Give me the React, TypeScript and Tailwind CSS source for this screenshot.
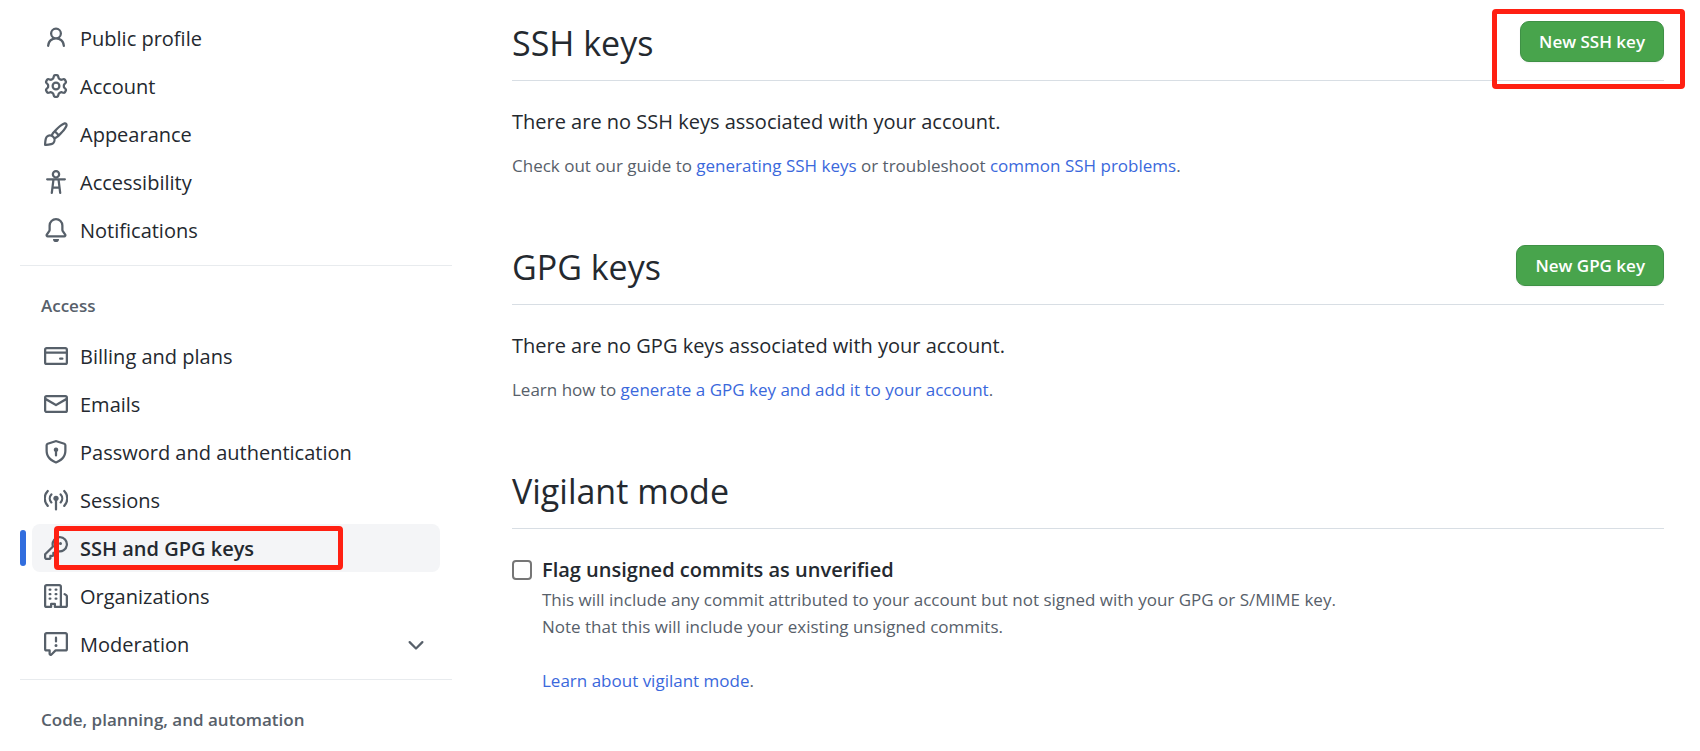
import type { ReactNode } from "react";

type NavItem = {
  label: string;
  icon: ReactNode;
  active?: boolean;
  expandable?: boolean;
};

function Octicon({ d }: { d: string }) {
  return (
    <svg viewBox="0 0 16 16" className="size-6 shrink-0 fill-[#57606a]" aria-hidden="true">
      <path fillRule="evenodd" d={d} />
    </svg>
  );
}

function AccessibilityIcon() {
  return (
    <svg
      viewBox="0 0 16 16"
      className="size-6 shrink-0 fill-none stroke-[#57606a] stroke-[1.5]"
      strokeLinecap="round"
      strokeLinejoin="round"
      aria-hidden="true"
    >
      <circle cx="8" cy="2.9" r="2.1" />
      <path d="M2.1 6.2h11.8M6.3 6.4l-1.1 8.8M9.7 6.4l1.1 8.8M5.7 11.8h4.6" />
    </svg>
  );
}

function BroadcastIcon() {
  return (
    <svg
      viewBox="0 0 16 16"
      className="size-6 shrink-0 fill-none stroke-[#57606a] stroke-[1.5]"
      strokeLinecap="round"
      aria-hidden="true"
    >
      <circle cx="8" cy="6.9" r="1.75" className="fill-[#57606a] stroke-none" />
      <path d="M8 7.5v6.8M4.9 4.3a3.9 3.9 0 0 0 0 5.3M11.1 4.3a3.9 3.9 0 0 1 0 5.3M2.5 2a7.1 7.1 0 0 0 0 9.9M13.5 2a7.1 7.1 0 0 1 0 9.9" />
    </svg>
  );
}

const accountItems: NavItem[] = [
  {
    label: "Public profile",
    icon: (
      <Octicon d="M10.5 5a2.5 2.5 0 11-5 0 2.5 2.5 0 015 0zm.061 3.073a4 4 0 10-5.123 0 6.004 6.004 0 00-3.431 5.142.75.75 0 001.498.07 4.5 4.5 0 018.99 0 .75.75 0 101.498-.07 6.005 6.005 0 00-3.432-5.142z" />
    ),
  },
  {
    label: "Account",
    icon: (
      <Octicon d="M7.429 1.525a6.593 6.593 0 011.142 0c.036.003.108.036.137.146l.289 1.105c.147.56.55.967.997 1.189.174.086.341.183.501.29.417.278.97.423 1.53.27l1.102-.303c.11-.03.175.016.195.046.219.31.41.641.573.989.014.031.022.11-.059.19l-.815.806c-.411.406-.562.957-.53 1.456a4.588 4.588 0 010 .582c-.032.499.119 1.05.53 1.456l.815.806c.08.08.073.159.059.19a6.494 6.494 0 01-.573.99c-.02.029-.086.074-.195.045l-1.103-.303c-.559-.153-1.112-.008-1.529.27-.16.107-.327.204-.5.29-.449.222-.851.628-.998 1.189l-.289 1.105c-.029.11-.101.143-.137.146a6.613 6.613 0 01-1.142 0c-.036-.003-.108-.037-.137-.146l-.289-1.105c-.147-.56-.55-.967-.997-1.189a4.502 4.502 0 01-.501-.29c-.417-.278-.97-.423-1.53-.27l-1.102.303c-.11.03-.175-.016-.195-.046a6.492 6.492 0 01-.573-.989c-.014-.031-.022-.11.059-.19l.815-.806c.411-.406.562-.957.53-1.456a4.587 4.587 0 010-.582c.032-.499-.119-1.05-.53-1.456l-.815-.806c-.08-.08-.073-.159-.059-.19a6.44 6.44 0 01.573-.99c.02-.029.086-.075.195-.045l1.103.303c.559.153 1.112.008 1.529-.27.16-.107.327-.204.5-.29.449-.222.851-.628.998-1.189l.289-1.105c.029-.11.101-.143.137-.146zM8 0c-.236 0-.47.01-.701.03-.743.065-1.29.615-1.458 1.261l-.29 1.106c-.017.066-.078.158-.211.224a5.994 5.994 0 00-.668.386c-.123.082-.233.09-.3.071L3.27 2.776c-.644-.177-1.392.02-1.82.63a7.977 7.977 0 00-.704 1.217c-.315.675-.111 1.422.363 1.891l.815.806c.05.048.098.147.088.294a6.084 6.084 0 000 .772c.01.147-.038.246-.088.294l-.815.806c-.474.469-.678 1.216-.363 1.891.2.428.436.835.704 1.218.428.609 1.176.806 1.82.63l1.103-.303c.066-.019.176-.011.299.071.213.143.436.272.668.386.133.066.194.158.212.224l.289 1.106c.169.646.715 1.196 1.458 1.26a8.094 8.094 0 001.402 0c.743-.064 1.29-.614 1.458-1.26l.29-1.106c.017-.066.078-.158.211-.224a5.98 5.98 0 00.668-.386c.123-.082.233-.09.3-.071l1.102.302c.644.177 1.392-.02 1.82-.63.268-.382.505-.789.704-1.217.315-.675.111-1.422-.364-1.891l-.814-.806c-.05-.048-.098-.147-.088-.294a6.1 6.1 0 000-.772c-.01-.147.039-.246.088-.294l.814-.806c.475-.469.679-1.216.364-1.891a7.992 7.992 0 00-.704-1.218c-.428-.609-1.176-.806-1.82-.63l-1.103.303c-.066.019-.176.011-.299-.071a5.991 5.991 0 00-.668-.386c-.133-.066-.194-.158-.212-.224L10.16 1.29C9.99.645 9.444.095 8.701.031A8.094 8.094 0 008 0zm1.5 8a1.5 1.5 0 11-3 0 1.5 1.5 0 013 0zM11 8a3 3 0 11-6 0 3 3 0 016 0z" />
    ),
  },
  {
    label: "Appearance",
    icon: (
      <Octicon d="M11.134 1.535C9.722 2.562 8.16 4.057 6.889 5.312 5.8 6.387 5.041 7.401 4.575 8.294a3.745 3.745 0 00-3.227 1.054c-.43.431-.69 1.066-.86 1.657a11.982 11.982 0 00-.358 1.914A21.263 21.263 0 000 15.203v.054l.75-.007-.007.75h.054a14.404 14.404 0 00.654-.012 21.243 21.243 0 001.63-.118c.62-.07 1.3-.18 1.914-.357.592-.17 1.226-.43 1.657-.861a3.745 3.745 0 001.055-3.217c.908-.461 1.942-1.216 3.04-2.3 1.279-1.262 2.764-2.825 3.775-4.249.501-.706.923-1.428 1.125-2.096.2-.659.235-1.469-.368-2.07-.606-.607-1.42-.55-2.069-.34-.66.213-1.376.646-2.076 1.155zm-3.95 8.48a3.76 3.76 0 00-1.19-1.192 9.758 9.758 0 011.161-1.607l1.658 1.658a9.853 9.853 0 01-1.63 1.142zM.742 16l.007-.75-.75.008A.75.75 0 00.743 16zM12.016 2.749c-1.224.89-2.605 2.189-3.822 3.384l1.718 1.718c1.21-1.205 2.51-2.597 3.387-3.833.47-.662.78-1.227.912-1.662.134-.444.032-.551.009-.575h-.001V1.78c-.014-.014-.112-.113-.548.027-.432.14-.995.462-1.655.942zM1.62 13.089a19.56 19.56 0 00-.104 1.395 19.55 19.55 0 001.396-.104 10.528 10.528 0 001.668-.309c.526-.151.856-.325 1.011-.48a2.25 2.25 0 00-3.182-3.182c-.155.155-.329.485-.48 1.01a10.515 10.515 0 00-.309 1.67z" />
    ),
  },
  { label: "Accessibility", icon: <AccessibilityIcon /> },
  {
    label: "Notifications",
    icon: (
      <Octicon d="M8 16a2 2 0 001.985-1.75c.017-.137-.097-.25-.235-.25h-3.5c-.138 0-.252.113-.235.25A2 2 0 008 16zM8 1.5A3.5 3.5 0 004.5 5v2.947c0 .346-.102.683-.294.97l-1.703 2.556a.018.018 0 00-.003.01l.001.006c0 .002.002.004.004.006a.017.017 0 00.006.004l.007.001h10.964l.007-.001a.016.016 0 00.006-.004.016.016 0 00.004-.006l.001-.007a.017.017 0 00-.003-.01l-1.703-2.554a1.75 1.75 0 01-.294-.97V5A3.5 3.5 0 008 1.5zM3 5a5 5 0 0110 0v2.947c0 .05.015.098.042.139l1.703 2.555A1.518 1.518 0 0113.482 13H2.518a1.518 1.518 0 01-1.263-2.36l1.703-2.554A.25.25 0 003 7.947V5z" />
    ),
  },
];

const accessItems: NavItem[] = [
  {
    label: "Billing and plans",
    icon: (
      <Octicon d="M10.75 9a.75.75 0 000 1.5h1.5a.75.75 0 000-1.5h-1.5zM0 3.75C0 2.784.784 2 1.75 2h12.5c.966 0 1.75.784 1.75 1.75v8.5A1.75 1.75 0 0114.25 14H1.75A1.75 1.75 0 010 12.25v-8.5zm14.5 0V5h-13V3.75a.25.25 0 01.25-.25h12.5a.25.25 0 01.25.25zm0 2.75h-13v5.75c0 .138.112.25.25.25h12.5a.25.25 0 00.25-.25V6.5z" />
    ),
  },
  {
    label: "Emails",
    icon: (
      <Octicon d="M1.75 2A1.75 1.75 0 000 3.75v.736a.75.75 0 000 .027v7.737C0 13.216.784 14 1.75 14h12.5A1.75 1.75 0 0016 12.25v-8.5A1.75 1.75 0 0014.25 2H1.75zM14.5 4.07v-.32a.25.25 0 00-.25-.25H1.75a.25.25 0 00-.25.25v.32L8 7.88l6.5-3.81zm-13 1.74v6.441c0 .138.112.25.25.25h12.5a.25.25 0 00.25-.25V5.809L8.38 9.397a.75.75 0 01-.76 0L1.5 5.809z" />
    ),
  },
  {
    label: "Password and authentication",
    icon: (
      <Octicon d="M7.467.133a1.75 1.75 0 011.066 0l5.25 1.68A1.75 1.75 0 0115 3.48V7c0 1.566-.32 3.182-1.303 4.682-.983 1.498-2.585 2.813-5.032 3.855a1.7 1.7 0 01-1.33 0c-2.447-1.042-4.049-2.357-5.032-3.855C1.32 10.182 1 8.566 1 7V3.48a1.75 1.75 0 011.217-1.667l5.25-1.68zm.61 1.429a.25.25 0 00-.153 0l-5.25 1.68a.25.25 0 00-.174.238V7c0 1.358.275 2.666 1.057 3.86.784 1.194 2.121 2.34 4.366 3.297a.2.2 0 00.154 0c2.245-.956 3.582-2.104 4.366-3.298C13.225 9.666 13.5 8.36 13.5 7V3.48a.25.25 0 00-.174-.237l-5.25-1.68zM9.5 6.5a1.5 1.5 0 01-.75 1.3v2.45a.75.75 0 01-1.5 0V7.8A1.5 1.5 0 119.5 6.5z" />
    ),
  },
  { label: "Sessions", icon: <BroadcastIcon /> },
  {
    label: "SSH and GPG keys",
    active: true,
    icon: (
      <Octicon d="M6.5 5.5a4 4 0 112.731 3.795.75.75 0 00-.768.18L7.44 10.5H6.25a.75.75 0 00-.75.75v1.19l-.06.06H4.25a.75.75 0 00-.75.75v1.19l-.06.06H1.75a.25.25 0 01-.25-.25v-1.69l5.024-5.023a.75.75 0 00.181-.768A3.995 3.995 0 016.5 5.5zm4-5.5a5.5 5.5 0 00-5.348 6.788L.22 11.72a.75.75 0 00-.22.53v2C0 15.216.784 16 1.75 16h2a.75.75 0 00.53-.22l.5-.5a.75.75 0 00.22-.53V14h.75a.75.75 0 00.53-.22l.5-.5a.75.75 0 00.22-.53V12h.75a.75.75 0 00.53-.22l.932-.932A5.5 5.5 0 1010.5 0zm.5 6a1 1 0 100-2 1 1 0 000 2z" />
    ),
  },
  {
    label: "Organizations",
    icon: (
      <Octicon d="M1.5 14.25c0 .138.112.25.25.25H4v-1.25a.75.75 0 01.75-.75h2.5a.75.75 0 01.75.75v1.25h2.25a.25.25 0 00.25-.25V1.75a.25.25 0 00-.25-.25h-8.5a.25.25 0 00-.25.25v12.5zM1.75 16A1.75 1.75 0 010 14.25V1.75C0 .784.784 0 1.75 0h8.5C11.216 0 12 .784 12 1.75v12.5c0 .085-.006.168-.018.25h2.268a.25.25 0 00.25-.25V8.285a.25.25 0 00-.111-.208l-1.055-.703a.75.75 0 11.832-1.248l1.055.703c.487.325.779.871.779 1.456v5.965A1.75 1.75 0 0114.25 16h-3.5a.75.75 0 01-.197-.026c-.099.017-.2.026-.303.026h-3a.75.75 0 01-.75-.75V14h-1v1.25a.75.75 0 01-.75.75h-3zM3 3.75A.75.75 0 013.75 3h.5a.75.75 0 010 1.5h-.5A.75.75 0 013 3.75zM3.75 6a.75.75 0 000 1.5h.5a.75.75 0 000-1.5h-.5zM3 9.75A.75.75 0 013.75 9h.5a.75.75 0 010 1.5h-.5A.75.75 0 013 9.75zM7.75 9a.75.75 0 000 1.5h.5a.75.75 0 000-1.5h-.5zM7 6.75A.75.75 0 017.75 6h.5a.75.75 0 010 1.5h-.5A.75.75 0 017 6.75zM7.75 3a.75.75 0 000 1.5h.5a.75.75 0 000-1.5h-.5z" />
    ),
  },
  {
    label: "Moderation",
    expandable: true,
    icon: (
      <Octicon d="M0 1.75C0 .784.784 0 1.75 0h12.5C15.216 0 16 .784 16 1.75v9.5A1.75 1.75 0 0114.25 13H8.06l-2.573 2.573A1.457 1.457 0 013 14.543V13H1.75A1.75 1.75 0 010 11.25v-9.5zm1.75-.25a.25.25 0 00-.25.25v9.5c0 .138.112.25.25.25h2a.75.75 0 01.75.75v2.19l2.72-2.72a.75.75 0 01.53-.22h6.5a.25.25 0 00.25-.25v-9.5a.25.25 0 00-.25-.25H1.75zM9 9a1 1 0 11-2 0 1 1 0 012 0zm-.25-5.25a.75.75 0 00-1.5 0v2.5a.75.75 0 001.5 0v-2.5z" />
    ),
  },
];

const rowClass = "flex h-12 w-full items-center gap-3 rounded-lg px-3 text-left";

function NavRow({ item }: { item: NavItem }) {
  if (item.expandable) {
    return (
      <li className="px-3">
        <button type="button" className={rowClass}>
          {item.icon}
          <span className="grow pt-0.5">{item.label}</span>
          <Octicon d="M12.78 6.22a.75.75 0 010 1.06l-4.25 4.25a.75.75 0 01-1.06 0L3.22 7.28a.75.75 0 011.06-1.06L8 9.94l3.72-3.72a.75.75 0 011.06 0z" />
        </button>
      </li>
    );
  }

  if (item.active) {
    return (
      <li className="relative px-3">
        <span className="absolute left-0 top-1.5 h-9 w-1.5 rounded-md bg-[#316dde]" />
        <a href="#keys" aria-current="page" className={`${rowClass} bg-[#f4f5f7] font-semibold`}>
          {item.icon}
          <span className="pt-0.5">{item.label}</span>
        </a>
        {/* highlight around the current page */}
        <span className="pointer-events-none absolute left-[34px] top-0.5 h-11 w-[289px] rounded border-5 border-[#ff2012]" />
      </li>
    );
  }

  return (
    <li className="px-3">
      <a href="#settings" className={rowClass}>
        {item.icon}
        <span className="pt-0.5">{item.label}</span>
      </a>
    </li>
  );
}

function NavHeading({ children }: { children: ReactNode }) {
  return (
    <h3 className="px-[21px] text-[17px] font-semibold leading-[27px] text-[#57606a]">
      {children}
    </h3>
  );
}

function SectionHeader({ title, children }: { title: string; children?: ReactNode }) {
  return (
    <div className="flex items-start justify-between border-b border-[#d8dee4] pb-2.5">
      <h2 className="text-[34px] leading-[54px]">{title}</h2>
      {children}
    </div>
  );
}

function GreenButton({ children }: { children: ReactNode }) {
  return (
    <button
      type="button"
      className="mt-[5px] h-[41px] rounded-[9px] border border-[#3f9146] bg-[#48a44c] px-[18px] text-[17px] font-semibold text-white shadow-xs"
    >
      {children}
    </button>
  );
}

function TextLink({ children }: { children: ReactNode }) {
  return (
    <a href="#docs" className="text-[#3a68dc]">
      {children}
    </a>
  );
}

export default function App() {
  return (
    <div className="flex items-start gap-[60px] bg-white pl-5 pr-9 font-['Open_Sans',sans-serif] text-xl text-[#24292f]">
      <nav aria-label="Settings" className="w-[432px] shrink-0 pt-3.5">
        <ul>
          {accountItems.map((item) => (
            <NavRow key={item.label} item={item} />
          ))}
        </ul>
        <hr className="mb-[26px] mt-[11px] border-[#e8ebee]" />
        <NavHeading>Access</NavHeading>
        <ul className="mt-[13px]">
          {accessItems.map((item) => (
            <NavRow key={item.label} item={item} />
          ))}
        </ul>
        <hr className="mb-[26px] mt-[11px] border-[#e8ebee]" />
        <NavHeading>Code, planning, and automation</NavHeading>
      </nav>

      <main className="flex min-w-0 grow flex-col gap-[61px] pt-4">
        <section>
          <div className="relative">
            <SectionHeader title="SSH keys">
              <GreenButton>New SSH key</GreenButton>
            </SectionHeader>
            {/* highlight around the new key button */}
            <span className="pointer-events-none absolute -right-[21px] -top-[7px] h-20 w-[193px] rounded border-5 border-[#ff2012]" />
          </div>
          <p className="mt-[25px] leading-8">There are no SSH keys associated with your account.</p>
          <p className="mt-3.5 text-[17px] leading-[27px] text-[#57606a]">
            Check out our guide to <TextLink>generating SSH keys</TextLink> or troubleshoot{" "}
            <TextLink>common SSH problems</TextLink>.
          </p>
        </section>

        <section>
          <SectionHeader title="GPG keys">
            <GreenButton>New GPG key</GreenButton>
          </SectionHeader>
          <p className="mt-[25px] leading-8">There are no GPG keys associated with your account.</p>
          <p className="mt-3.5 text-[17px] leading-[27px] text-[#57606a]">
            Learn how to <TextLink>generate a GPG key and add it to your account</TextLink>.
          </p>
        </section>

        <section>
          <SectionHeader title="Vigilant mode" />
          <div className="mt-[25px] flex items-start gap-2.5">
            <input
              id="vigilant"
              type="checkbox"
              className="mt-1.5 size-5 shrink-0 appearance-none rounded border-2 border-[#767676] bg-white"
            />
            <div className="text-[17px] leading-[27px] text-[#57606a]">
              <label htmlFor="vigilant" className="text-xl font-semibold leading-8 text-[#24292f]">
                Flag unsigned commits as unverified
              </label>
              <p>
                This will include any commit attributed to your account but not signed with your GPG
                or S/MIME key.
                <br />
                Note that this will include your existing unsigned commits.
              </p>
              <p className="mt-[27px]">
                <TextLink>Learn about vigilant mode</TextLink>.
              </p>
            </div>
          </div>
        </section>
      </main>
    </div>
  );
}
